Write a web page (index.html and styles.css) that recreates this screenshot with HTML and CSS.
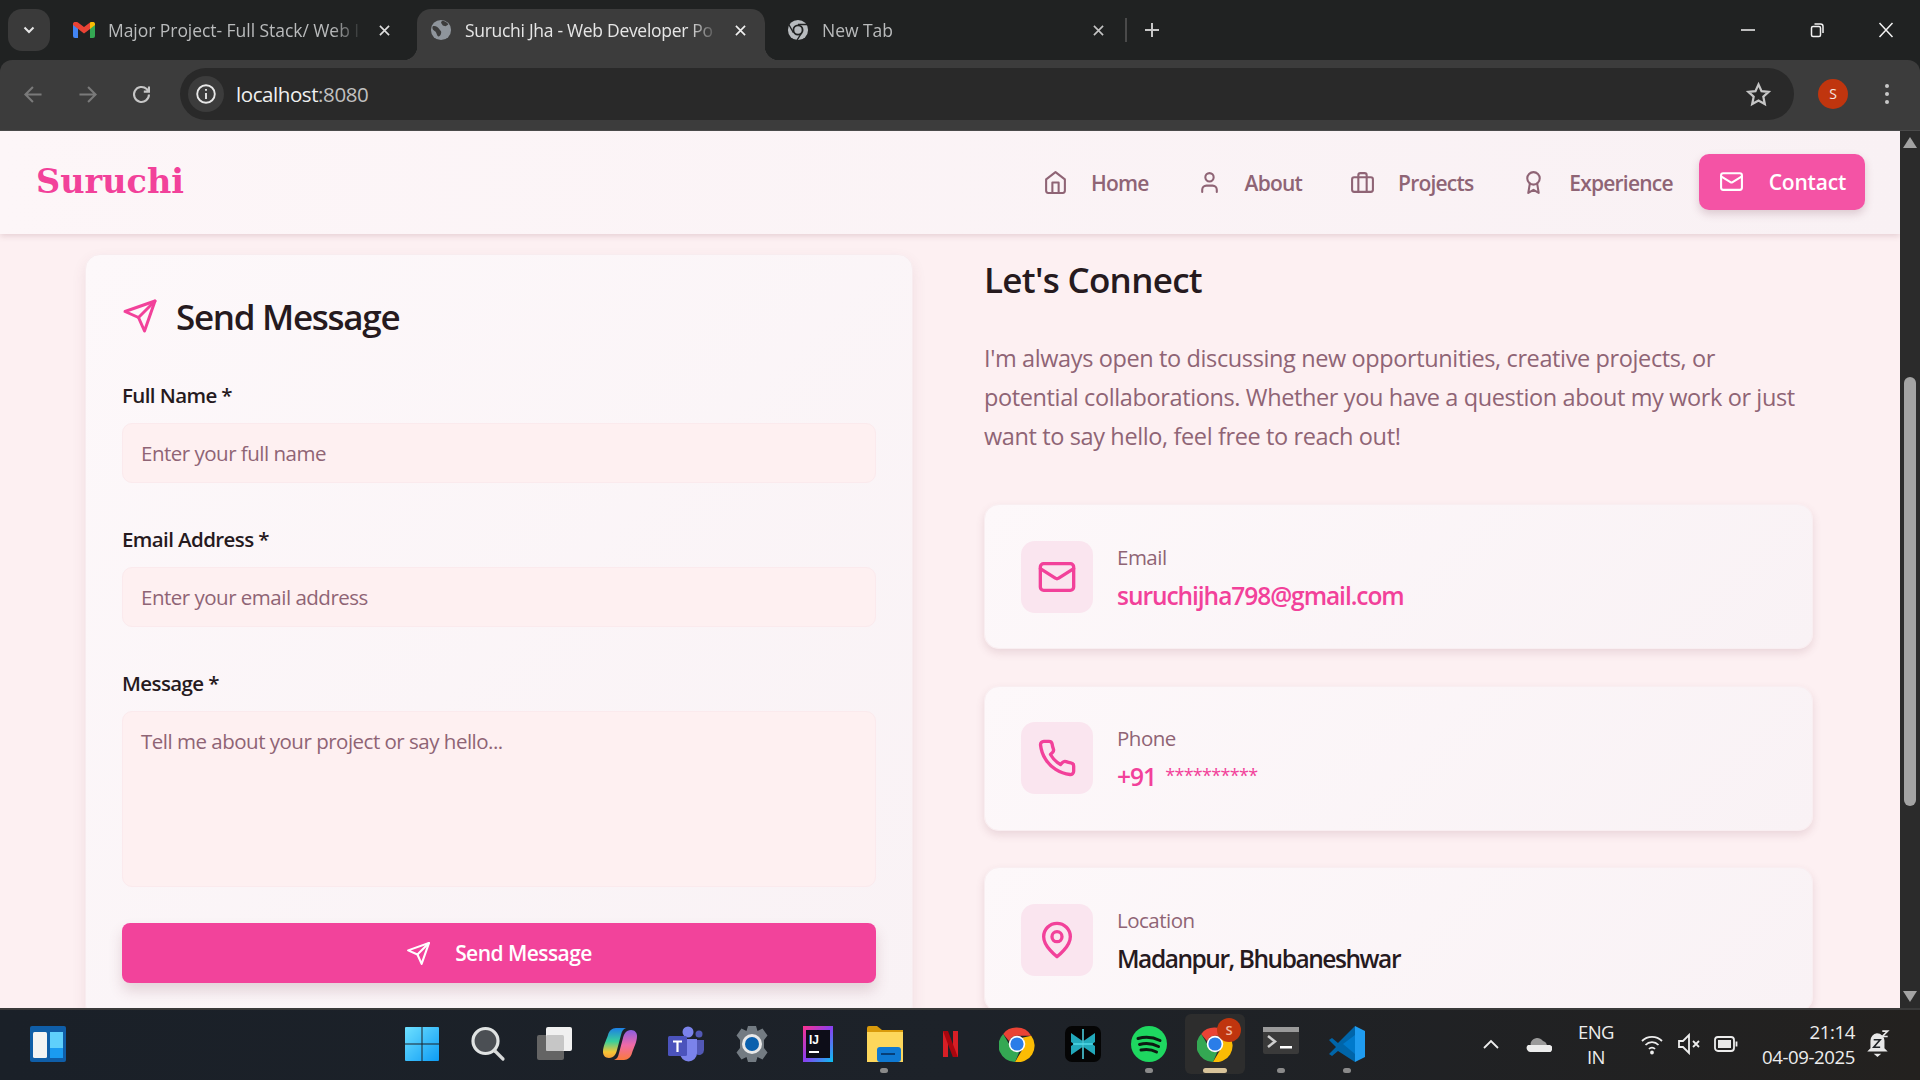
FILE: index.html
```html
<!DOCTYPE html>
<html lang="en">
<head>
<meta charset="utf-8">
<title>Suruchi Jha - Web Developer Portfolio</title>
<link rel="stylesheet" href="styles.css">
</head>
<body>
<svg class="sprite" aria-hidden="true">
  <symbol id="i-home" viewBox="0 0 24 24"><path d="m3 9 9-7 9 7v11a2 2 0 0 1-2 2H5a2 2 0 0 1-2-2z"/><path d="M9 22V12h6v10"/></symbol>
  <symbol id="i-user" viewBox="0 0 24 24"><path d="M19 21v-2a4 4 0 0 0-4-4H9a4 4 0 0 0-4 4v2"/><circle cx="12" cy="7" r="4"/></symbol>
  <symbol id="i-brief" viewBox="0 0 24 24"><rect x="2" y="7" width="20" height="14" rx="2"/><path d="M16 21V5a2 2 0 0 0-2-2h-4a2 2 0 0 0-2 2v16"/></symbol>
  <symbol id="i-award" viewBox="0 0 24 24"><circle cx="12" cy="8" r="6"/><path d="M15.477 12.89 17 22l-5-3-5 3 1.523-9.11"/></symbol>
  <symbol id="i-mail" viewBox="0 0 24 24"><rect x="2" y="4" width="20" height="16" rx="2"/><path d="m22 7-8.97 5.7a1.94 1.94 0 0 1-2.06 0L2 7"/></symbol>
  <symbol id="i-send" viewBox="0 0 24 24"><path d="m22 2-7 20-4-9-9-4Z"/><path d="M22 2 11 13"/></symbol>
  <symbol id="i-phone" viewBox="0 0 24 24"><path d="M22 16.92v3a2 2 0 0 1-2.18 2 19.79 19.79 0 0 1-8.63-3.07 19.5 19.5 0 0 1-6-6 19.79 19.79 0 0 1-3.07-8.67A2 2 0 0 1 4.11 2h3a2 2 0 0 1 2 1.72 12.84 12.84 0 0 0 .7 2.81 2 2 0 0 1-.45 2.11L8.09 9.91a16 16 0 0 0 6 6l1.27-1.27a2 2 0 0 1 2.11-.45 12.84 12.84 0 0 0 2.81.7A2 2 0 0 1 22 16.92z"/></symbol>
  <symbol id="i-pin" viewBox="0 0 24 24"><path d="M20 10c0 6-8 12-8 12s-8-6-8-12a8 8 0 0 1 16 0Z"/><circle cx="12" cy="10" r="3"/></symbol>
  <symbol id="i-x" viewBox="0 0 12 12"><path d="m1 1 10 10M11 1 1 11"/></symbol>
  <symbol id="i-chrome" viewBox="0 0 48 48">
    <path fill="#ea4335" d="M24 2a22 22 0 0 1 19 11H24a11 11 0 0 0-10.400 7.400L5.600 10.500A22 22 0 0 1 24 2z"/>
    <path fill="#34a853" d="M5.600 10.500l8.600 14.900A11 11 0 0 0 27 34.600l-5.600 13.300A22 22 0 0 1 5.600 10.500z"/>
    <path fill="#fbbc04" d="M43 13a22 22 0 0 1-21.600 34.900L31.600 30.500A11 11 0 0 0 31 15.500z"/>
    <circle cx="24" cy="24" r="11" fill="#fff"/><circle cx="24" cy="24" r="8.800" fill="#2a7de8"/>
  </symbol>
</svg>

<header class="browser">
  <div class="tabstrip">
    <div class="tabmenu"><svg class="tabmenu-icon" viewBox="0 0 12 12"><path d="M1.500 3.500 6 8l4.500-4.500"/></svg></div>
    <div class="tab tab-first">
      <svg class="favicon favicon-gmail" viewBox="0 0 22 16"><path fill="#4285f4" d="M0 2v12a2 2 0 0 0 2 2h3V6z"/><path fill="#34a853" d="M17 6v10h3a2 2 0 0 0 2-2V2z"/><path fill="#ea4335" d="M0 2c0-2 3-3 5-1.500L11 5l6-4.500V7l-6 4.500L0 3z"/><path fill="#fbbc04" d="M17 .5C19-1 22 0 22 2v1l-5 4z"/></svg>
      <span class="tab-title">Major Project- Full Stack/ Web I</span>
      <svg class="tab-x"><use href="#i-x"/></svg>
    </div>
    <div class="tab tab-active">
      <svg class="favicon" viewBox="0 0 24 24"><circle cx="12" cy="12" r="11" fill="#8f959c"/><path fill="#3c3c3c" d="M3 8c3-1 6 1 7 3s3 2 2 5-3 4-4 2-1-4-3-5-3-3-2-5zM13 2c3 0 6 2 7 4l-3 2-3-1-2-3z"/></svg>
      <span class="tab-title tab-title-light">Suruchi Jha - Web Developer Po</span>
      <svg class="tab-x tab-x-light"><use href="#i-x"/></svg>
    </div>
    <div class="tab tab-third">
      <svg class="favicon" viewBox="0 0 24 24"><circle cx="12" cy="12" r="11" fill="#b8bcbf"/><circle cx="12" cy="12" r="6" fill="#202222"/><circle cx="12" cy="12" r="4" fill="#b8bcbf"/><path d="M12 6h10M7 15 2 6M16 15l-5 8" stroke="#202222" stroke-width="1.500"/></svg>
      <span class="tab-title">New Tab</span>
      <svg class="tab-x tab-x-dim"><use href="#i-x"/></svg>
    </div>
    <span class="tab-sep"></span>
    <svg class="tab-plus" viewBox="0 0 16 16"><path d="M8 1v14M1 8h14"/></svg>
    <div class="winctl">
      <svg class="win-icon" viewBox="0 0 16 16"><path d="M1 8h14"/></svg>
      <svg class="win-icon" viewBox="0 0 16 16"><rect x="2.500" y="4.500" width="9" height="10" rx="1.500"/><path d="M5.500 2h6a2.500 2.500 0 0 1 2.500 2.500V11"/></svg>
      <svg class="win-icon" viewBox="0 0 16 16"><path d="m1.500 1 13 14M14.500 1l-13 14"/></svg>
    </div>
  </div>
  <div class="toolbar">
    <svg class="tool tool-dim" viewBox="0 0 20 20"><path d="M17 10H3M9.500 3.500 3 10l6.500 6.500"/></svg>
    <svg class="tool tool-dim" viewBox="0 0 20 20"><path d="M3 10h14M10.500 3.500 17 10l-6.500 6.500"/></svg>
    <svg class="tool" viewBox="0 0 20 20"><path d="M16.500 10a6.500 6.500 0 1 1-2-4.700L16.500 7.500M16.500 3v4.500H12"/></svg>
    <div class="omnibox">
      <span class="site-info"><svg class="site-icon" viewBox="0 0 20 20"><circle cx="10" cy="10" r="8"/><path d="M10 9v5.500M10 5.500v1.500"/></svg></span>
      <span class="url">localhost<span class="url-dim">:8080</span></span>
      <svg class="star" viewBox="0 0 24 24"><path d="m12 3 2.700 6 6.300.700-4.700 4.300 1.300 6.500L12 17.300 6.400 20.500 7.700 14 3 9.700 9.300 9z"/></svg>
    </div>
    <span class="avatar">S</span>
    <span class="kebab"><i></i><i></i><i></i></span>
  </div>
</header>

<div class="window">
  <div class="page">
    <nav class="nav">
      <a class="logo">Suruchi</a>
      <div class="navlinks">
        <a class="navlink"><svg class="ln ln-nav"><use href="#i-home"/></svg>Home</a>
        <a class="navlink"><svg class="ln ln-nav"><use href="#i-user"/></svg>About</a>
        <a class="navlink"><svg class="ln ln-nav"><use href="#i-brief"/></svg>Projects</a>
        <a class="navlink navlink-last"><svg class="ln ln-nav"><use href="#i-award"/></svg>Experience</a>
        <a class="navlink navlink-active"><svg class="ln ln-nav"><use href="#i-mail"/></svg>Contact</a>
      </div>
    </nav>
    <main class="content">
      <section class="formcard">
        <h2 class="formtitle"><svg class="ln ln-title"><use href="#i-send"/></svg>Send Message</h2>
        <label class="label">Full Name *</label>
        <input class="field" placeholder="Enter your full name">
        <label class="label">Email Address *</label>
        <input class="field" placeholder="Enter your email address">
        <label class="label">Message *</label>
        <textarea class="field field-area" placeholder="Tell me about your project or say hello..."></textarea>
        <button class="submit"><svg class="ln ln-submit"><use href="#i-send"/></svg>Send Message</button>
      </section>
      <section class="connect">
        <h2 class="connect-title">Let's Connect</h2>
        <p class="connect-text">I'm always open to discussing new opportunities, creative projects, or potential collaborations. Whether you have a question about my work or just want to say hello, feel free to reach out!</p>
        <div class="info">
          <span class="info-icon"><svg class="ln ln-info"><use href="#i-mail"/></svg></span>
          <div><div class="info-label">Email</div><div class="info-value info-pink">suruchijha798@gmail.com</div></div>
        </div>
        <div class="info">
          <span class="info-icon"><svg class="ln ln-info"><use href="#i-phone"/></svg></span>
          <div><div class="info-label">Phone</div><div class="info-value info-pink">+91 <span class="info-mask">**********</span></div></div>
        </div>
        <div class="info">
          <span class="info-icon"><svg class="ln ln-info"><use href="#i-pin"/></svg></span>
          <div><div class="info-label">Location</div><div class="info-value info-place">Madanpur, Bhubaneshwar</div></div>
        </div>
      </section>
    </main>
  </div>
  <div class="scrollbar">
    <span class="arrow arrow-up"></span>
    <span class="thumb"></span>
    <span class="arrow arrow-down"></span>
  </div>
</div>

<footer class="taskbar">
  <div class="tb-left">
    <svg class="tb-icon" viewBox="0 0 36 36"><rect width="36" height="36" rx="2" fill="#0f5ea8"/><rect x="3" y="6" width="14" height="26" rx="1.500" fill="#f3f3f3"/><rect x="20" y="6" width="13" height="16" fill="#5fd0fb"/><rect x="20" y="22" width="13" height="10" fill="#1a9bf0"/></svg>
  </div>
  <div class="tb-center">
    <span class="tb-cell"><svg class="tb-icon" viewBox="0 0 36 36"><defs><linearGradient id="wn" x1="0" y1="0" x2="1" y2="1"><stop offset="0" stop-color="#6ee0ff"/><stop offset="1" stop-color="#0d9cf5"/></linearGradient></defs><path fill="url(#wn)" d="M1 2a1 1 0 0 1 1-1h15.500v16.500H1zM18.500 1H34a1 1 0 0 1 1 1v15.500H18.500zM1 18.500h16.500V35H2a1 1 0 0 1-1-1zM18.500 18.500H35V34a1 1 0 0 1-1 1H18.500z"/></svg></span>
    <span class="tb-cell"><svg class="tb-icon" viewBox="0 0 36 36"><circle cx="15.500" cy="15" r="12.500" fill="#4b4f54" stroke="#e0e3e3" stroke-width="3.200"/><path d="m25 25 8 8" stroke="#d8dada" stroke-width="3.200" stroke-linecap="round"/></svg></span>
    <span class="tb-cell"><svg class="tb-icon" viewBox="0 0 36 36"><rect x="1" y="9" width="27" height="25" rx="2" fill="#646464"/><rect x="10" y="1" width="26" height="24" rx="2" fill="#f0f0f0"/><rect x="10" y="9" width="18" height="16" rx="1.500" fill="#c6c6c6"/></svg></span>
    <span class="tb-cell"><svg class="tb-icon" viewBox="0 0 36 36"><defs><linearGradient id="cpa" x1="0" y1="0" x2="0" y2="1"><stop offset="0" stop-color="#1c7fe6"/><stop offset=".45" stop-color="#39d09a"/><stop offset=".8" stop-color="#f6c535"/><stop offset="1" stop-color="#f6a03a"/></linearGradient><linearGradient id="cpb" x1="0" y1="0" x2="0" y2="1"><stop offset="0" stop-color="#f97b3c"/><stop offset=".5" stop-color="#f06aa8"/><stop offset="1" stop-color="#8a5ee0"/></linearGradient></defs><path fill="url(#cpa)" d="M14 2h10c-3 1-4 3-5 7l-4 15c-1 4-3 8-8 8-4 0-6-3-6-6 0-6 3-11 5-17 1-4 4-7 8-7z"/><path fill="url(#cpb)" transform="rotate(180 18 18)" d="M14 2h10c-3 1-4 3-5 7l-4 15c-1 4-3 8-8 8-4 0-6-3-6-6 0-6 3-11 5-17 1-4 4-7 8-7z"/></svg></span>
    <span class="tb-cell"><svg class="tb-icon" viewBox="0 0 36 36"><circle cx="20" cy="6" r="5.500" fill="#7b83eb"/><circle cx="31" cy="8" r="3.500" fill="#5258b5"/><path fill="#5258b5" d="M28 14h8v10a5 5 0 0 1-8 4z"/><path fill="#7b83eb" d="M12 13h17v14a8.500 8.500 0 0 1-17 0z"/><rect y="10" width="19" height="20" rx="1.500" fill="#4b53bc"/><path d="M5 15.500h9M9.500 15.500V26" stroke="#fff" stroke-width="2.200"/></svg></span>
    <span class="tb-cell"><svg class="tb-icon" viewBox="0 0 36 36"><path fill="#737b82" d="M14 0h8l1.500 5 5-2.500 5 7-3.500 4.500 0 8 3.500 4.500-5 7-5-2.500-1.500 5h-8l-1.500-5-5 2.500-5-7L6 22V14L2.500 9.500l5-7 5 2.500z"/><circle cx="18" cy="18" r="10" fill="#e8e8e8"/><circle cx="18" cy="18" r="7" fill="#0a60ad"/></svg></span>
    <span class="tb-cell"><svg class="tb-icon" viewBox="0 0 36 36"><defs><linearGradient id="ij" x1="0" y1="0" x2="1" y2="1"><stop offset="0" stop-color="#ff318c"/><stop offset=".5" stop-color="#8a3ff0"/><stop offset="1" stop-color="#07c3f2"/></linearGradient></defs><rect x="3" width="30" height="36" fill="url(#ij)"/><rect x="6" y="4" width="24" height="28" fill="#0d0d18"/><text class="ij-text" x="9" y="18">IJ</text><rect x="9" y="25" width="10" height="2" fill="#fff"/></svg></span>
    <span class="tb-cell tb-open"><svg class="tb-icon" viewBox="0 0 36 36"><path fill="#d99a0b" d="M0 2a2 2 0 0 1 2-2h8l5 4h21v8H0z"/><path fill="#fdd75c" d="M0 6h36v30H0z"/><rect x="10" y="21" width="24" height="15" rx="3" fill="#0f79d2"/><rect x="14" y="27" width="14" height="2" fill="#063f78"/></svg></span>
    <span class="tb-cell"><svg class="tb-netflix" viewBox="0 0 15 26"><path fill="#d81f26" d="M0 0h5v26l-5 .5zM10 0h5v26.500l-5-.5z"/><path fill="#a8060e" d="M0 0h5l10 26.500h-5z"/></svg></span>
    <span class="tb-cell"><svg class="tb-icon"><use href="#i-chrome"/></svg></span>
    <span class="tb-cell"><svg class="tb-icon" viewBox="0 0 36 36"><rect width="36" height="36" rx="7" fill="#050505"/><path fill="#22a9bb" d="M6 7l11.500 8v6L6 29V20l3-2-3-2zM30 7 18.500 15v6L30 29v-9l-3-2 3-2z"/><path d="M18 3v30M8 18h20" stroke="#4fd8e8" stroke-width="1.500"/></svg></span>
    <span class="tb-cell tb-open"><svg class="tb-icon" viewBox="0 0 36 36"><circle cx="18" cy="18" r="18" fill="#1ed760"/><path d="M7 12.500c7-2 15-1.500 22 2M8.500 18.500c6-1.500 13-1 19 2M10 24c5-1 11-.5 15.500 2" stroke="#0d1a12" stroke-width="3" stroke-linecap="round" fill="none"/></svg></span>
    <span class="tb-cell tb-active"><svg class="tb-icon"><use href="#i-chrome"/></svg><span class="tb-badge">S</span></span>
    <span class="tb-cell tb-open"><svg class="tb-icon" viewBox="0 0 36 36"><rect y="1" width="36" height="27" rx="2" fill="#3a3a3a"/><rect y="1" width="36" height="5" fill="#9a9a9a"/><path d="m5 10 7 5.500-7 5.500" stroke="#cfcfcf" stroke-width="2.500" fill="none"/><rect x="17" y="20" width="12" height="2.500" fill="#fff"/></svg></span>
    <span class="tb-cell tb-open"><svg class="tb-icon" viewBox="0 0 36 36"><path fill="#0065a9" d="M26 0 9 17 3 12l-3 2 7 7-7 7 3 2 6-5 17 11z"/><path fill="#007acc" d="M26 9 14 18l12 10z"/><path fill="#1f9cf0" d="M26 0l10 5v26l-10 5z"/></svg></span>
  </div>
  <div class="tray">
    <svg class="tray-chevron" viewBox="0 0 16 10"><path d="m1 9 7-7 7 7"/></svg>
    <svg class="tray-cloud" viewBox="0 0 26 16"><path fill="#9a9a9a" d="M5 10a5 5 0 0 1 0-4A7 7 0 0 1 17 5a5.500 5.500 0 0 1 4 5z"/><path fill="#ececec" d="M2 9h22a3.500 3.500 0 0 1-3 7H5a4 4 0 0 1-3-7z"/></svg>
    <div class="lang"><span>ENG</span><span>IN</span></div>
    <div class="tray-status">
      <svg class="tray-ic" viewBox="0 0 24 22"><path d="M2 8a14 14 0 0 1 20 0M5.500 12a9 9 0 0 1 13 0M9 16a4 4 0 0 1 6 0"/><circle cx="12" cy="19.500" r="1"/></svg>
      <svg class="tray-ic" viewBox="0 0 24 22"><path d="M2 8h4l6-6v18l-6-6H2zM16 8l6 6M22 8l-6 6"/></svg>
      <svg class="tray-ic" viewBox="0 0 24 22"><rect x="1" y="4" width="19" height="14" rx="3"/><rect x="4" y="7" width="13" height="8" fill="#e8e8e8" stroke="none"/><path d="M22.500 8.500v5"/></svg>
    </div>
    <div class="clock"><span>21:14</span><span>04-09-2025</span></div>
    <svg class="bell" viewBox="0 0 22 26"><path fill="#e8e8e8" d="M10 3a7 7 0 0 1 7 7v7l3 3H1l3-3v-7a7 7 0 0 1 6-7zM7 22h7l-3.500 3z"/><path d="M7 9h6l-6 7h6" stroke="#202428" stroke-width="1.500" fill="none"/><path d="M15 1h5l-5 5h5" stroke="#e8e8e8" stroke-width="1.500" fill="none"/></svg>
  </div>
</footer>
</body>
</html>
```
FILE: styles.css
```css
* { box-sizing: border-box; }
html, body { margin: 0; height: 100%; }
body {
  display: flex;
  flex-direction: column;
  width: 1920px;
  height: 1080px;
  overflow: hidden;
  font-family: "Open Sans", "Noto Sans", sans-serif;
  background: #202222;
}
.sprite { display: none; }

/* browser chrome */
.browser { flex: none; height: 131px; background: #202222; }
.tabstrip { display: flex; align-items: flex-end; height: 60px; padding-left: 8px; }
.tabmenu { width: 42px; height: 42px; margin-bottom: 9px; border-radius: 14px; background: #3a3a3a; display: flex; align-items: center; justify-content: center; }
.tabmenu-icon { width: 12px; height: 12px; fill: none; stroke: #e6e6e6; stroke-width: 2; }
.tab { position: relative; flex: none; display: flex; align-items: center; height: 51px; padding: 0 0 9px 13px; font-size: 17.5px; letter-spacing: -0.05px; color: #b9bbbc; }
.tab-first { width: 359px; margin-left: 8px; padding-left: 15px; }
.tab-active { width: 348px; background: #3c3c3c; border-radius: 14px 14px 0 0; color: #e8e8e8; }
.tab-active::before, .tab-active::after { content: ""; position: absolute; bottom: 0; width: 14px; height: 14px; }
.tab-active::before { left: -14px; background: radial-gradient(circle at 0 0, transparent 14px, #3c3c3c 14.500px); }
.tab-active::after { right: -14px; background: radial-gradient(circle at 100% 0, transparent 14px, #3c3c3c 14.500px); }
.tab-third { width: 348px; padding-left: 22px; }
.favicon { flex: none; width: 22px; height: 22px; margin-right: 13px; }
.favicon-gmail { height: 16px; }
.tab-title { flex: 1; min-width: 0; white-space: nowrap; overflow: hidden; -webkit-mask-image: linear-gradient(90deg, #000 88%, transparent 100%); mask-image: linear-gradient(90deg, #000 88%, transparent 100%); }
.tab-active .tab-title { letter-spacing: -0.3px; }
.tab-title-light { color: #e6e6e6; }
.tab-x { flex: none; width: 11px; height: 11px; margin: 0 27px 0 16px; fill: none; stroke: #dedede; stroke-width: 1.800; }
.tab-x-light { margin-right: 19px; stroke: #f0f0f0; }
.tab-x-dim { margin-right: 9px; stroke: #c4c4c4; }
.tab-sep { flex: none; width: 2px; height: 24px; margin: 0 0 18px 12px; background: #4a4a4a; }
.tab-plus { flex: none; width: 16px; height: 16px; margin: 0 0 22px 17px; fill: none; stroke: #c8c8c8; stroke-width: 2; }
.winctl { display: flex; align-items: center; gap: 53px; margin-left: auto; padding: 0 26px 22px 0; }
.win-icon { width: 16px; height: 16px; fill: none; stroke: #f2f2f2; stroke-width: 1.5; }
.toolbar { display: flex; align-items: center; height: 71px; padding: 0 0 2px 0; background: #3c3c3c; border-radius: 12px 12px 0 0; border-bottom: 1px solid #4a4a4a; }
.tool { flex: none; width: 23px; height: 23px; margin-left: 31px; fill: none; stroke: #c6c6c6; stroke-width: 1.800; }
.tool:first-child { margin-left: 22px; }
.tool-dim { stroke: #7a7a7a; }
.omnibox { flex: none; display: flex; align-items: center; width: 1614px; height: 52px; margin-left: 27px; padding-left: 8px; border-radius: 26px; background: #292929; }
.site-info { display: flex; align-items: center; justify-content: center; width: 36px; height: 36px; border-radius: 50%; background: #3c3c3c; }
.site-icon { width: 22px; height: 22px; fill: none; stroke: #e8e8e8; stroke-width: 1.700; }
.url { margin-left: 12px; font-size: 20.5px; letter-spacing: -0.42px; color: #f0f0f0; }
.url-dim { color: #c0c0c0; }
.star { width: 27px; height: 27px; margin-left: auto; margin-right: 22px; fill: none; stroke: #c6c6c6; stroke-width: 2; }
.avatar { flex: none; width: 30px; height: 30px; margin-left: 24px; border-radius: 50%; background: #c0350e; color: #f6e9e2; font-size: 14px; line-height: 30px; text-align: center; }
.kebab { flex: none; display: flex; flex-direction: column; gap: 4px; margin-left: 37px; }
.kebab i { display: block; width: 4px; height: 4px; border-radius: 50%; background: #c8c8c8; }

/* page */
.window { flex: none; display: flex; height: 877px; }
.page { flex: none; width: 1900px; height: 877px; overflow: hidden; display: flex; flex-direction: column; background: #fdf0f2; }
.nav { flex: none; display: flex; align-items: center; justify-content: space-between; height: 103px; padding: 0 35px 0 36px; background: linear-gradient(90deg, #fdf6f8, #f9f1f4); box-shadow: 0 2px 6px rgba(120, 60, 80, .18); position: relative; z-index: 1; }
.logo { margin-top: -2px; font-family: "DejaVu Serif", "Liberation Serif", serif; font-weight: 700; font-size: 33.5px; color: #f2419a; }
.navlinks { display: flex; align-items: center; gap: 8px; }
.navlink { display: flex; align-items: center; gap: 23px; height: 56px; padding: 0 20px; font-size: 21px; font-weight: 600; letter-spacing: -0.8px; color: #8f6475; }
.navlink-last { margin-right: -2px; }
.navlink-active { padding: 0 19px 0 20px; margin-top: -2px; gap: 25px; border-radius: 10px; background: #f453a5; color: #fff; letter-spacing: -0.2px; box-shadow: 0 4px 8px rgba(120, 60, 80, .22); }
.ln { fill: none; stroke: currentColor; stroke-width: 2; stroke-linecap: round; stroke-linejoin: round; }
.ln-nav { width: 25px; height: 25px; }
.content { display: grid; grid-template-columns: 828px 829px; column-gap: 71px; padding: 20px 0 0 85px; }
.formcard { align-self: start; padding: 34px 36px 36px; background: linear-gradient(135deg, #fdf8fa, #f9f2f5); border: 1px solid #f8ecef; border-radius: 15px; box-shadow: 0 6px 14px rgba(120, 60, 80, .10); }
.formtitle { display: flex; align-items: center; gap: 18px; margin: 0 0 37px; height: 54px; font-size: 35px; font-weight: 600; letter-spacing: -1.3px; color: #261a1e; }
.ln-title { width: 36px; height: 36px; color: #f2419a; }
.label { display: block; height: 31px; margin-bottom: 12px; font-size: 20.5px; font-weight: 600; letter-spacing: -0.6px; line-height: 31px; color: #261a1e; }
.field { display: block; width: 100%; height: 60px; margin-bottom: 41px; padding: 0 18px; border: 1px solid #fbeaed; border-radius: 10px; background: #fef0f1; font-family: inherit; font-size: 20.5px; letter-spacing: -0.5px; color: #261a1e; outline: none; }
.field::placeholder { color: #8f6475; opacity: 1; }
.field-area { height: 176px; padding-top: 15px; resize: none; margin-bottom: 36px; }
.submit { display: flex; align-items: center; justify-content: center; gap: 24px; width: 100%; height: 60px; border: 0; border-radius: 8px; background: #f2439b; color: #fff; font-family: inherit; font-size: 21px; font-weight: 600; letter-spacing: -0.55px; box-shadow: 0 8px 14px rgba(120, 60, 80, .18); }
.ln-submit { width: 25px; height: 25px; }
.connect { padding-top: 1px; }
.connect-title { margin: 0 0 34px; height: 50px; font-size: 35px; font-weight: 600; letter-spacing: -0.7px; line-height: 50px; color: #261a1e; }
.connect-text { margin: 0 0 48px; padding-right: 8px; font-size: 23.5px; line-height: 39px; letter-spacing: -0.38px; color: #8f6475; }
.info { display: flex; align-items: center; gap: 24px; height: 145px; margin-bottom: 36.5px; padding: 0 36px; border: 1px solid #f9eef1; border-radius: 15px; background: linear-gradient(135deg, #fdf8fa, #f9f2f5); box-shadow: 0 4px 8px rgba(120, 60, 80, .14); }
.info-icon { flex: none; display: flex; align-items: center; justify-content: center; width: 72px; height: 72px; border-radius: 14px; background: #fae5ef; color: #f2419a; }
.ln-info { width: 40px; height: 40px; }
.info-label { font-size: 20.5px; line-height: 30px; letter-spacing: -0.5px; color: #8f6475; }
.info-value { margin-top: 8px; font-size: 24.5px; font-weight: 600; line-height: 32px; letter-spacing: -1.05px; color: #261a1e; }
.info-place { letter-spacing: -1.45px; }
.info-pink { color: #f2419a; }
.info-mask { margin-left: 4px; font-size: 18px; font-weight: 500; letter-spacing: -0.7px; vertical-align: 4px; line-height: 1; }

/* scrollbar */
.scrollbar { flex: none; width: 20px; height: 877px; background: #2b2b2b; display: flex; flex-direction: column; align-items: center; }
.arrow { flex: none; width: 0; height: 0; border-left: 7px solid transparent; border-right: 7px solid transparent; }
.arrow-up { margin-top: 6px; border-bottom: 11px solid #a3a3a3; }
.thumb { flex: none; width: 12px; height: 429px; margin-top: 229px; border-radius: 6px; background: #a3a3a3; }
.arrow-down { margin-top: auto; margin-bottom: 6px; border-top: 11px solid #a3a3a3; }

/* taskbar */
.taskbar { flex: none; display: flex; align-items: center; height: 72px; padding-bottom: 2px; border-top: 2px solid #3a3a3a; background: linear-gradient(90deg, #1a2028, #1d2229 50%, #23211f); }
.tb-left { flex: none; width: 388.5px; padding-left: 30px; display: flex; }
.tb-center { flex: none; display: flex; }
.tb-cell { position: relative; display: flex; align-items: center; justify-content: center; width: 66.15px; height: 60px; }
.tb-icon { flex: none; width: 36px; height: 36px; }
.tb-netflix { flex: none; width: 15px; height: 26px; }
.ij-text { font-family: "Liberation Sans", sans-serif; font-size: 12px; font-weight: 700; fill: #fff; }
.tb-open::after { content: ""; position: absolute; bottom: 1px; left: 29px; width: 8px; height: 5px; border-radius: 3px; background: #8a8a8a; }
.tb-active { background: #2d2d2d; border-radius: 6px; width: 60px; margin: 0 3px; }
.tb-active::after { content: ""; position: absolute; bottom: 1px; left: 18px; width: 24px; height: 5px; border-radius: 3px; background: #d8c39a; }
.tb-badge { position: absolute; top: 4px; right: 4px; width: 24px; height: 24px; border-radius: 50%; background: #c0350e; color: #f0b8a0; font-size: 13px; font-weight: 600; line-height: 24px; text-align: center; }
.tray { flex: 1; display: flex; align-items: center; color: #ededed; }
.tray-chevron { flex: none; width: 16px; height: 10px; margin-left: 102.5px; fill: none; stroke: #ededed; stroke-width: 1.800; }
.tray-cloud { flex: none; width: 26px; height: 16px; margin-left: 27px; }
.lang { display: flex; flex-direction: column; align-items: center; width: 40px; margin-left: 24px; font-size: 18.5px; letter-spacing: -0.5px; line-height: 25px; }
.tray-status { display: flex; align-items: center; gap: 13px; margin-left: 24px; }
.tray-ic { flex: none; width: 24px; height: 22px; fill: none; stroke: #ededed; stroke-width: 1.800; }
.clock { display: flex; flex-direction: column; align-items: flex-end; width: 117px; font-size: 18.6px; letter-spacing: -0.4px; line-height: 25px; }
.bell { flex: none; width: 24px; height: 28px; margin-left: 11px; }
```
